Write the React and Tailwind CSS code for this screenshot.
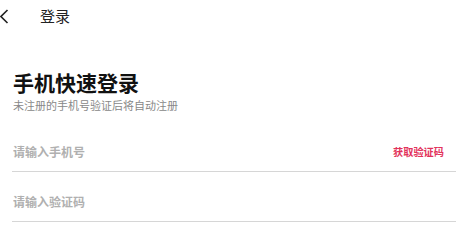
import React, { useState } from "react";

const cjk = { fontFamily: '"Noto Sans CJK SC", "Noto Sans", sans-serif' };

const Login = () => {
  const [form, setForm] = useState({ phone: "", code: "" });

  const handleChange = (e) => {
    const { name, value } = e.target;
    setForm((prev) => ({ ...prev, [name]: value }));
  };

  return (
    <div className="w-[456px] h-[241px] bg-white overflow-hidden" style={cjk}>
      {/* header */}
      <div className="flex items-center h-[32px]">
        <svg width="9" height="15" viewBox="0 0 9 15" className="shrink-0">
          <path d="M7.5 1 L1 7.5 L7.5 14" fill="none" stroke="#222" strokeWidth="1.6" />
        </svg>
        <span className="ml-[31px] text-[15px] text-[#222]">登录</span>
      </div>

      {/* title */}
      <div className="pl-[13px] pt-[36px]">
        <h1 className="text-[21px] leading-[28px] font-bold text-[#111]">手机快速登录</h1>
        <p className="mt-[2px] text-[11px] leading-[14px] text-[#888]">未注册的手机号验证后将自动注册</p>
      </div>

      {/* fields */}
      <form className="ml-[12px] mt-[10px]" onSubmit={(e) => e.preventDefault()}>
        <div className="flex items-center h-[50px] pt-[11px] border-b border-[#d6d6d6]">
          <input
            type="tel"
            name="phone"
            value={form.phone}
            onChange={handleChange}
            placeholder="请输入手机号"
            className="flex-1 pl-[1px] text-[12px] font-bold outline-none placeholder:text-[#b0b0b0]"
            style={cjk}
          />
          <button type="button" className="mr-[12px] text-[10.2px] font-bold text-[#e2325b]" style={cjk}>
            获取验证码
          </button>
        </div>
        <div className="flex items-center h-[50px] pt-[11px] border-b border-[#d6d6d6]">
          <input
            type="text"
            name="code"
            value={form.code}
            onChange={handleChange}
            placeholder="请输入验证码"
            className="flex-1 pl-[1px] text-[12px] font-bold outline-none placeholder:text-[#b0b0b0]"
            style={cjk}
          />
        </div>
      </form>
    </div>
  );
};

export default Login;
